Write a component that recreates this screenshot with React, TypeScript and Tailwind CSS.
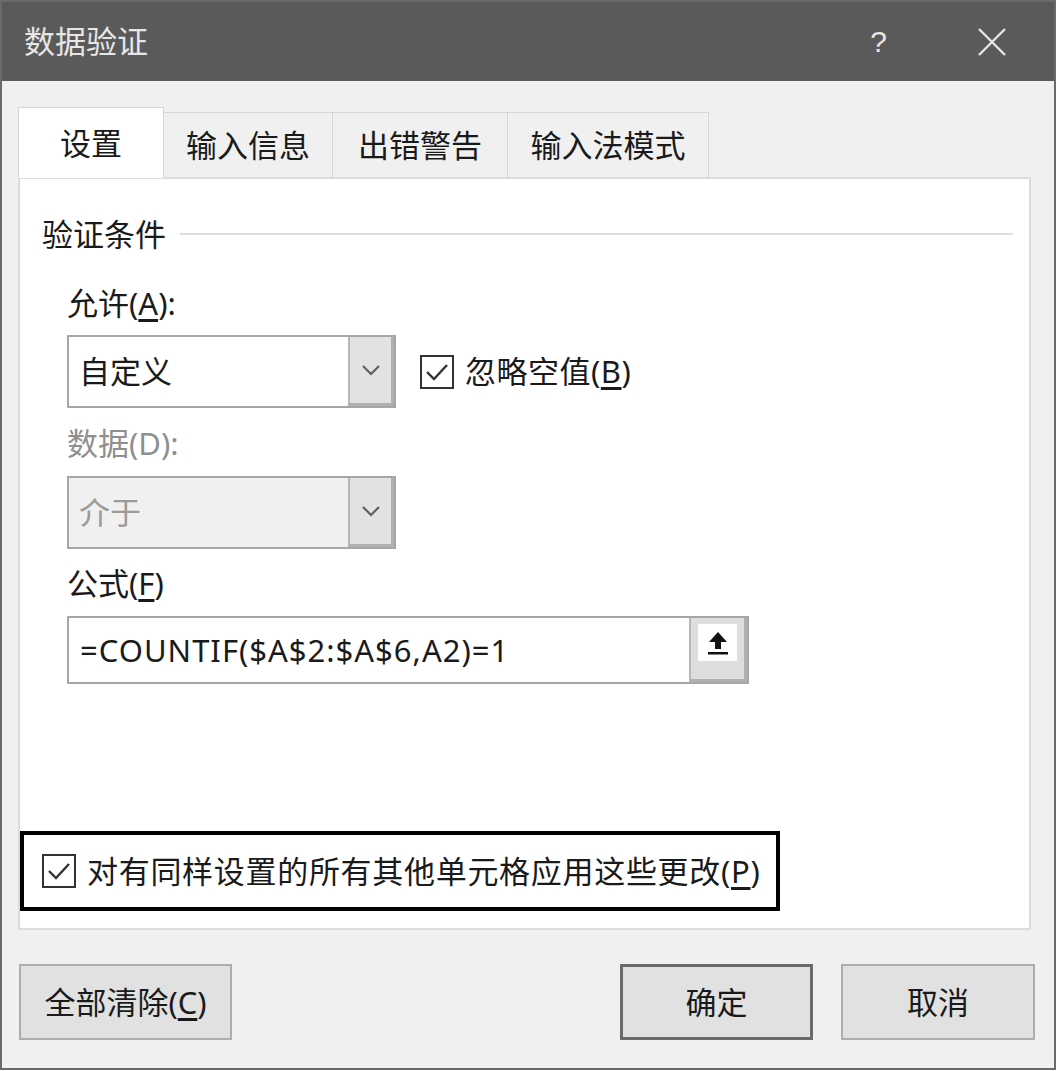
import React from "react";

const Check = () => (
  <div className="w-[34px] h-[34px] border-2 border-[#333333] bg-white flex items-center justify-center shrink-0">
    <svg width="26" height="22" viewBox="0 0 26 22" fill="none">
      <path d="M3 11 L10 18 L23 4" stroke="#333333" strokeWidth="2.4" />
    </svg>
  </div>
);

const Chevron = () => (
  <svg width="20" height="12" viewBox="0 0 20 12" fill="none">
    <path d="M2 2 L10 10 L18 2" stroke="#606060" strokeWidth="2.2" />
  </svg>
);

const Combo = ({ text, disabled }: { text: string; disabled?: boolean }) => (
  <div
    className={`w-[329px] h-[73px] border-2 border-[#a6a6a6] flex ${
      disabled ? "bg-[#f0f0f0]" : "bg-white"
    }`}
  >
    <div
      className={`flex-1 flex items-center pl-[10px] ${
        disabled ? "text-[#9a9a9a]" : "text-[#1a1a1a]"
      }`}
    >
      {text}
    </div>
    <div className="w-[46px] bg-[#e2e2e2] border-l-2 border-[#b8b8b8] border-r-[3px] border-b-[3px] border-r-[#b0b0b0] border-b-[#b0b0b0] flex items-center justify-center">
      <Chevron />
    </div>
  </div>
);

export default function App() {
  return (
    <div className="w-[1058px] h-[1071px] bg-white font-['Noto_Sans','Noto_Sans_CJK_SC',sans-serif] text-[31px] text-[#1a1a1a]">
      <div className="w-[1056px] h-[1070px] border-2 border-[#6a6a6a] bg-[#f0f0f0] flex flex-col">
        {/* Title bar */}
        <div className="h-[79px] bg-[#5a5a5a] flex items-center shrink-0">
          <div className="pl-[22px] text-[#e6e6e6] text-[31px] leading-none">数据验证</div>
          <div className="flex-1" />
          <div className="text-[#e6e6e6] text-[30px] leading-none mr-[90px] font-['Liberation_Sans',sans-serif]">?</div>
          <svg width="30" height="30" viewBox="0 0 30 30" className="mr-[47px]">
            <path d="M2 2 L28 28 M28 2 L2 28" stroke="#e6e6e6" strokeWidth="2.4" />
          </svg>
        </div>

        {/* Body */}
        <div className="flex-1 flex flex-col pl-[16px]">
          {/* Tabs */}
          <div className="mt-[26px] h-[71px] flex items-end relative z-10">
            <div className="w-[146px] h-[71px] bg-white border border-[#d6d6d6] border-b-0 flex items-center justify-center">
              设置
            </div>
            <div className="w-[169px] h-[66px] border border-[#d6d6d6] border-l-0 border-b-0 flex items-center justify-center">
              输入信息
            </div>
            <div className="w-[175px] h-[66px] border border-[#d6d6d6] border-l-0 border-b-0 flex items-center justify-center">
              出错警告
            </div>
            <div className="w-[201px] h-[66px] border border-[#d6d6d6] border-l-0 border-b-0 flex items-center justify-center">
              输入法模式
            </div>
          </div>

          {/* Panel */}
          <div className="-mt-px w-[1013px] h-[753px] bg-white border-2 border-[#dcdcdc] flex flex-col">
            <div className="mt-[35px] h-[40px] flex items-center pl-[22px] pr-[16px]">
              <span className="leading-none">验证条件</span>
              <div className="flex-1 ml-[14px] h-[2px] bg-[#dedede]" />
            </div>

            <div className="pl-[47px] flex flex-col">
              <div className="mt-[29px] h-[40px] flex items-center">
                允许(<span className="underline underline-offset-4">A</span>):
              </div>
              <div className="mt-[12px] flex items-center">
                <Combo text="自定义" />
                <div className="ml-[24px] flex items-center">
                  <Check />
                  <span className="ml-[11px] tracking-[0.5px]">
                    忽略空值(<span className="underline underline-offset-4">B</span>)
                  </span>
                </div>
              </div>
              <div className="mt-[15px] h-[40px] flex items-center text-[#8f8f8f]">数据(D):</div>
              <div className="mt-[13px]">
                <Combo text="介于" disabled />
              </div>
              <div className="mt-[14px] h-[40px] flex items-center">
                公式(<span className="underline underline-offset-4">F</span>)
              </div>
              <div className="mt-[13px] w-[682px] h-[68px] border-2 border-[#a6a6a6] bg-white flex">
                <div className="flex-1 flex items-center pl-[11px] text-[31px] tracking-[1px]">=COUNTIF($A$2:$A$6,A2)=1</div>
                <div className="w-[58px] bg-[#dedede] border-l-2 border-[#b8b8b8] border-r-[3px] border-b-[3px] border-r-[#b0b0b0] border-b-[#b0b0b0] pt-[6px] px-[7px]">
                  <div className="h-[37px] bg-white flex items-center justify-center">
                    <svg width="24" height="26" viewBox="0 0 24 26">
                      <path d="M12 2 L3 12 H9 V19 H15 V12 H21 Z" fill="#111111" />
                      <rect x="2" y="22" width="20" height="2.5" fill="#111111" />
                    </svg>
                  </div>
                </div>
              </div>
            </div>

            <div className="mt-auto mb-[17px] w-[760px] h-[80px] border-4 border-black flex items-center pl-[18px]">
              <Check />
              <span className="ml-[11px] tracking-[0.7px]">
                对有同样设置的所有其他单元格应用这些更改(<span className="underline underline-offset-4">P</span>)
              </span>
            </div>
          </div>

          {/* Buttons */}
          <div className="mt-[34px] flex items-center pr-[19px]">
            <div className="w-[213px] h-[76px] bg-[#e1e1e1] border-2 border-[#adadad] flex items-center justify-center ml-[1px]">
              全部清除(<span className="underline underline-offset-4">C</span>)
            </div>
            <div className="flex-1" />
            <div className="w-[193px] h-[76px] bg-[#e1e1e1] border-[3px] border-[#6b6b6b] flex items-center justify-center">
              确定
            </div>
            <div className="ml-[28px] w-[194px] h-[76px] bg-[#e1e1e1] border-2 border-[#adadad] flex items-center justify-center">
              取消
            </div>
          </div>
        </div>
      </div>
    </div>
  );
}
